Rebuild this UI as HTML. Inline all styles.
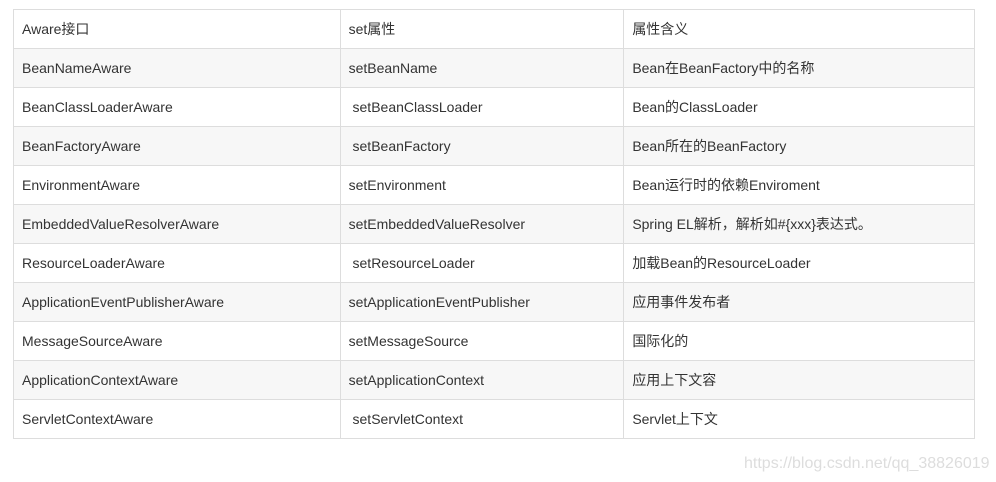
<!DOCTYPE html>
<html><head><meta charset="utf-8"><style>
body{margin:0;width:996px;height:482px;background:#fff;position:relative;font-family:"Liberation Sans","Noto Sans CJK SC",sans-serif;}
table{position:absolute;left:13px;top:9px;border-collapse:collapse;width:962px;font-size:14px;color:#333;}
td{border:1px solid #ddd;height:39px;padding:0 0 0 8px;box-sizing:border-box;white-space:pre;}
tr:nth-child(even) td{background:#f7f7f7;}
.wm{position:absolute;left:744px;top:455px;font-size:16px;color:#ddd;}
</style></head><body>
<table>
<colgroup><col style="width:327px"><col style="width:284px"><col style="width:351px"></colgroup>
<tr><td>Aware接口</td><td>set属性</td><td>属性含义</td></tr>
<tr><td>BeanNameAware</td><td>setBeanName</td><td>Bean在BeanFactory中的名称</td></tr>
<tr><td>BeanClassLoaderAware</td><td> setBeanClassLoader</td><td>Bean的ClassLoader</td></tr>
<tr><td>BeanFactoryAware</td><td> setBeanFactory</td><td>Bean所在的BeanFactory</td></tr>
<tr><td>EnvironmentAware</td><td>setEnvironment</td><td>Bean运行时的依赖Enviroment</td></tr>
<tr><td>EmbeddedValueResolverAware</td><td>setEmbeddedValueResolver</td><td>Spring EL解析，解析如#{xxx}表达式。</td></tr>
<tr><td>ResourceLoaderAware</td><td> setResourceLoader</td><td>加载Bean的ResourceLoader</td></tr>
<tr><td>ApplicationEventPublisherAware</td><td>setApplicationEventPublisher</td><td>应用事件发布者</td></tr>
<tr><td>MessageSourceAware</td><td>setMessageSource</td><td>国际化的</td></tr>
<tr><td>ApplicationContextAware</td><td>setApplicationContext</td><td>应用上下文容</td></tr>
<tr><td>ServletContextAware</td><td> setServletContext</td><td>Servlet上下文</td></tr>
</table>
<div class="wm">https://blog.csdn.net/qq_38826019</div>
</body></html>
